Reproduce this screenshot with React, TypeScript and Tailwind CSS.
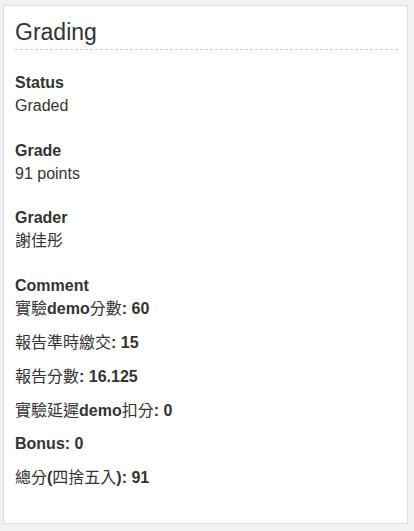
import React from "react";

const font = { fontFamily: '"Liberation Sans", Arial, "Noto Sans CJK TC", sans-serif' };

function C({ children }: { children: React.ReactNode }) {
  return <span className="font-normal">{children}</span>;
}

function Field({ label, value }: { label: string; value: React.ReactNode }) {
  return (
    <div className="mb-[22px]">
      <dt className="font-bold">{label}</dt>
      <dd>{value}</dd>
    </div>
  );
}

export default function App() {
  const lines: React.ReactNode[] = [
    <>
      <C>實驗</C>demo<C>分數</C>: 60
    </>,
    <>
      <C>報告準時繳交</C>: 15
    </>,
    <>
      <C>報告分數</C>: 16.125
    </>,
    <>
      <C>實驗延遲</C>demo<C>扣分</C>: 0
    </>,
    <>Bonus: 0</>,
    <>
      <C>總分</C>(<C>四捨五入</C>): 91
    </>,
  ];
  return (
    <div
      className="w-[414px] h-[531px] bg-[#f2f2f2] pt-[5px] pl-[3px] text-[#333] text-[16px] leading-[22.86px]"
      style={font}
    >
      <div className="w-[405px] h-[519px] bg-white border border-[#dddddd] pt-[14px] pl-[11px] pr-[9px]">
        <h2 className="text-[23px] leading-[24px] pb-[5px] border-b border-dashed border-[#cccccc] font-normal">
          Grading
        </h2>
        <dl className="mt-[22px]">
          <Field label="Status" value="Graded" />
          <Field label="Grade" value="91 points" />
          <Field label="Grader" value="謝佳彤" />
          <div>
            <dt className="font-bold">Comment</dt>
            <dd>
              {lines.map((l, i) => (
                <p key={i} className="font-bold mb-[11px]">
                  {l}
                </p>
              ))}
            </dd>
          </div>
        </dl>
      </div>
    </div>
  );
}
